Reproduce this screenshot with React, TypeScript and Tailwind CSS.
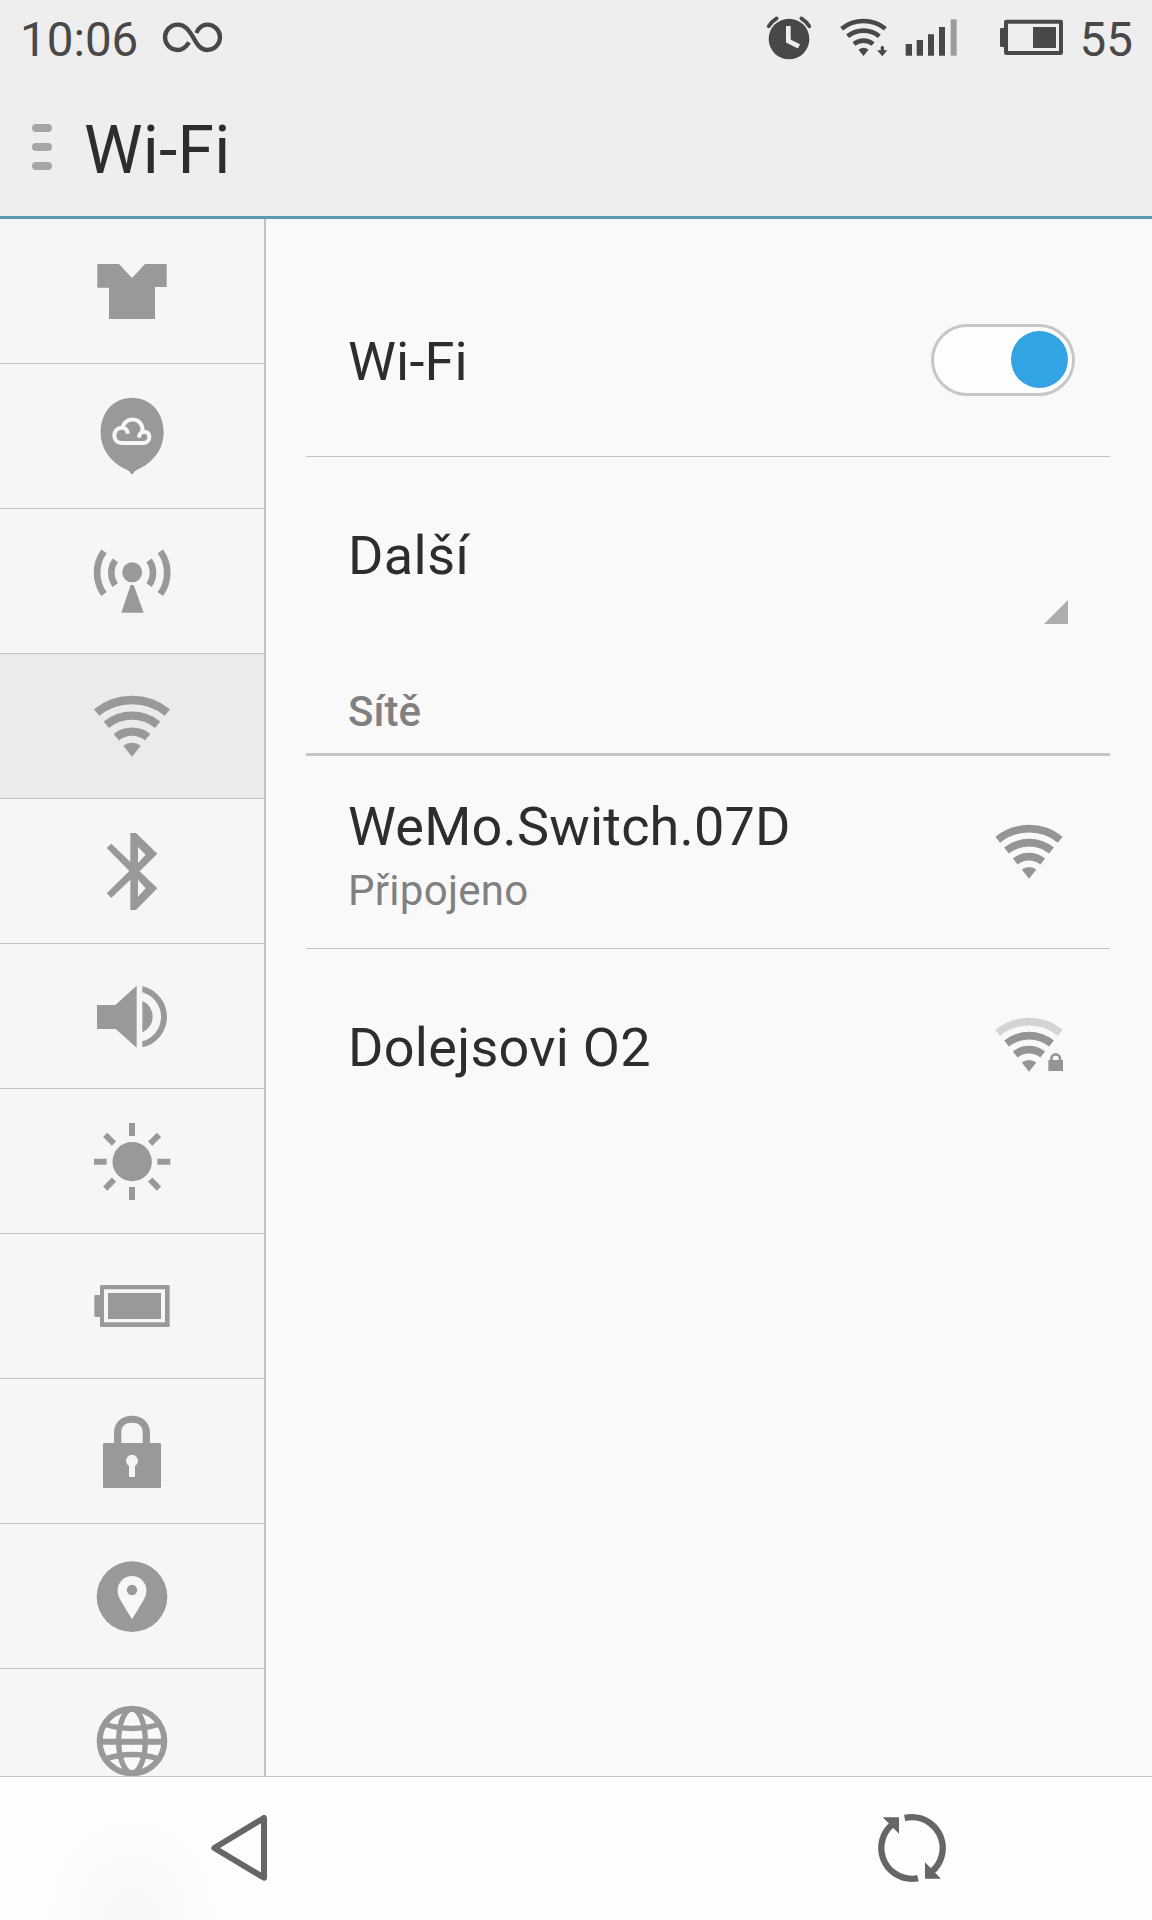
import type { ReactNode } from "react";

const SIN = 0.625;
const COS = 0.78;

type WifiProps = {
  cx: number;
  cy: number;
  radii: number[];
  width: number;
  tip: number;
  weak?: boolean;
};

/* Concentric arcs around the tip of a wedge */
function WifiShape({ cx, cy, radii, width, tip, weak }: WifiProps) {
  return (
    <>
      {radii.map((r, i) => (
        <path
          key={r}
          d={`M${cx - r * SIN} ${cy - r * COS}A${r} ${r} 0 0 1 ${cx + r * SIN} ${cy - r * COS}`}
          fill="none"
          stroke={weak && i === 0 ? "#d4d4d4" : "currentColor"}
          strokeWidth={width}
        />
      ))}
      <path
        d={`M${cx} ${cy}L${cx - tip * SIN} ${cy - tip * COS}A${tip} ${tip} 0 0 1 ${cx + tip * SIN} ${cy - tip * COS}Z`}
        fill="currentColor"
      />
    </>
  );
}

const sidebar: { name: string; box: string; active?: boolean; icon: ReactNode }[] = [
  {
    name: "Themes",
    box: "276 108 240 240",
    icon: <path d="M292 147H357L396 189L435 147H500V216H465V312H327V218H292Z" />,
  },
  {
    name: "Cloud",
    box: "276 543 240 240",
    icon: (
      <>
        <path d="M396 548C342 548 302 590 302 652C302 705 335 745 383 766Q391 769 393 777H399Q401 769 409 766C457 745 491 705 491 652C491 590 450 548 396 548Z" />
        <path
          d="M384 656Q381 638 366 638A22 23 0 0 0 343 662A21 22 0 0 0 364 684H430A18 18 0 0 0 448 666Q448 650 431 650Q418 652 417 668M368 637A29 29 0 0 1 427 650"
          fill="none"
          stroke="#f7f7f7"
          strokeWidth="12"
        />
      </>
    ),
  },
  {
    name: "Network",
    box: "276 123 240 240",
    icon: (
      <>
        <circle cx="396.5" cy="217" r="30" />
        <path d="M392 255H401L431 338H364Z" />
        <g fill="none" stroke="currentColor" strokeWidth="20">
          <path d="M346 181A63 63 0 0 0 346 255M447 181A63 63 0 0 1 447 255" />
          <path d="M312 154A109 109 0 0 0 312 282M481 154A109 109 0 0 1 481 282" />
        </g>
      </>
    ),
  },
  {
    name: "Wi-Fi",
    box: "276 558 240 240",
    active: true,
    icon: <WifiShape cx={396} cy={770} radii={[170, 123, 75]} width={25} tip={42} />,
  },
  {
    name: "Bluetooth",
    box: "276 123 240 240",
    icon: (
      <path
        fillRule="evenodd"
        d="M391 129H408L472 191L419 244L472 295L408 360H391V269L334 324L320 310L388 243L320 174L334 161L391 216ZM414 171V219L437 194ZM414 269V320L437 295Z"
      />
    ),
  },
  {
    name: "Sound",
    box: "276 558 240 240",
    icon: (
      <>
        <path d="M291 645H346L410 587V773L347 717H291ZM427 633A51 51 0 0 1 427 727Z" />
        <path d="M427 589A93.6 93.6 0 0 1 427 772V754A76.2 76.2 0 0 0 427 607Z" />
      </>
    ),
  },
  {
    name: "Display",
    box: "276 123 240 240",
    icon: (
      <>
        <circle cx="396.5" cy="245" r="59" />
        <path
          d="M396 129V168M396 321V360M282 245.500H320M472 245.500H511M315.500 164.500L342 191M477 164.500L450.500 191M342 299L315.500 326M450.500 299L477 326"
          fill="none"
          stroke="currentColor"
          strokeWidth="18"
        />
      </>
    ),
  },
  {
    name: "Battery",
    box: "276 558 240 240",
    icon: (
      <>
        <path
          fillRule="evenodd"
          d="M304 615H505Q509 615 509 619V737Q509 741 505 741H304Q300 741 300 737V711H287Q283 711 283 707V649Q283 645 287 645H300V619Q300 615 304 615ZM312 628V727H495V628Z"
        />
        <rect x="324" y="639" width="159" height="78" />
      </>
    ),
  },
  {
    name: "Security",
    box: "276 123 240 240",
    icon: (
      <>
        <path
          fillRule="evenodd"
          d="M342 222V188C342 158 364 137 396 137C428 137 450 158 450 188V222ZM364 219H428V185C428 168 415 158 396 158C377 158 364 168 364 185Z"
        />
        <rect x="309" y="219" width="174" height="135" rx="4" />
        <path d="M387 321V288A18 18 0 1 1 405 288V321Z" fill="#f5f5f5" />
      </>
    ),
  },
  {
    name: "Location",
    box: "276 558 240 240",
    icon: (
      <>
        <circle cx="396" cy="680" r="106" />
        <path d="M396 748L361 690C356 681 353 673 353 661A43 43 0 0 1 439 661C439 673 436 681 431 690Z" fill="#f7f7f7" />
        <circle cx="396" cy="660" r="15.500" />
      </>
    ),
  },
  {
    name: "Language",
    box: "276 183 240 240",
    icon: (
      <>
        <circle cx="396" cy="303" r="97" fill="#f9f9f9" />
        <g fill="none" stroke="currentColor" strokeWidth="16">
          <circle cx="396" cy="303" r="97" strokeWidth="18" />
          <ellipse cx="396" cy="303" rx="40" ry="96" />
          <path d="M300 305.500H492" strokeWidth="18" />
          <path d="M312 252Q396 279 480 252M312 358Q396 329 480 358" />
        </g>
      </>
    ),
  },
];

function StatusBar() {
  return (
    <div className="flex h-20 items-center justify-between pl-[20px] pr-[19px] text-[47.500px] leading-[80px] text-[#484848]">
      <div className="flex items-center gap-[24px]">
        <span className="-mt-px">10:06</span>
        <svg className="h-20 w-[61px]" viewBox="486 0 183 240" fill="none" stroke="currentColor" strokeWidth="13">
          <path d="M567 127C557 143 547 150 533 150A38 38 0 0 1 533 74C558 74 569 95 579 111C590 129 599 150 622 150A38 38 0 0 0 622 74C606 74 596 83 589 99" />
        </svg>
      </div>
      <div className="flex items-center">
        <svg className="mr-[26px] h-20 w-12" viewBox="75 0 144 240" fill="currentColor">
          <circle cx="147" cy="117" r="61" />
          <path d="M145 78V123L177 139" fill="none" stroke="#eeeeee" strokeWidth="14" />
          <path
            d="M86 79A73 73 0 0 1 110 55M184 55A73 73 0 0 1 208 79"
            fill="none"
            stroke="currentColor"
            strokeWidth="11"
            strokeLinecap="round"
          />
        </svg>
        <svg className="mr-4 h-20 w-[49px]" viewBox="297 0 147 240">
          <WifiShape cx={370.5} cy={168} radii={[105, 76, 46]} width={14} tip={24} />
          <path d="M422 141L427 137L432 141V151H442L427 169L411 151H422Z" fill="currentColor" />
        </svg>
        <svg className="mr-[41px] h-20 w-[54px]" viewBox="492 0 162 240" fill="currentColor">
          <path d="M497 132H516V167H497ZM530 120H549V167H530ZM564 103H582V167H564ZM597 81H615V167H597Z" />
          <path d="M632 58H650V167H632Z" fill="#9b9b9b" />
        </svg>
        <svg className="mr-[16px] h-20 w-[65px]" viewBox="777 0 195 240" fill="currentColor">
          <rect x="798" y="65" width="165" height="94" rx="1" fill="none" stroke="currentColor" strokeWidth="12" />
          <rect x="780" y="84" width="16" height="57" rx="4" />
          <rect x="879" y="81" width="69" height="63" />
        </svg>
        <span className="-mt-px">55</span>
      </div>
    </div>
  );
}

function TitleBar() {
  return (
    <div className="flex h-[136px] items-center pl-8">
      <div className="flex flex-col gap-[11px] pb-[3px]">
        <span className="h-2 w-5 rounded-full bg-[#a6a6a6]" />
        <span className="h-2 w-5 rounded-full bg-[#a6a6a6]" />
        <span className="h-2 w-5 rounded-full bg-[#a6a6a6]" />
      </div>
      <h1 className="pl-8 pt-[5px] text-[66px] leading-[80px] tracking-[0.2px] text-[#2d2d2d]">Wi-Fi</h1>
    </div>
  );
}

function Sidebar() {
  return (
    <nav className="h-full w-[266px] shrink-0 overflow-hidden border-r-2 border-[#c3c3c3] bg-[#f6f6f6]">
      {sidebar.map((item) => (
        <div
          key={item.name}
          className={`flex h-[145px] items-center justify-center border-b border-[#c3c3c3] text-[#98999b] ${
            item.active ? "bg-[#ebebeb]" : "bg-[#f6f6f6]"
          }`}
        >
          <svg className="size-20" viewBox={item.box} fill="currentColor">
            {item.icon}
          </svg>
        </div>
      ))}
    </nav>
  );
}

function NetworkIcon({ locked }: { locked?: boolean }) {
  return (
    <svg className="mr-[45px] h-16 w-[72px] text-[#959595]" viewBox="99 270 216 192" fill="currentColor">
      <WifiShape cx={207} cy={446} radii={[150, 108, 66]} width={23} tip={35} weak={locked} />
      {locked && (
        <>
          <rect x="265" y="411" width="44" height="33" />
          <path d="M274 413V407A13 13 0 0 1 300 407V413" fill="none" stroke="currentColor" strokeWidth="8" />
        </>
      )}
    </svg>
  );
}

function Content() {
  return (
    <main className="flex-1 pl-10 pr-[42px] text-[54px] leading-[64px] tracking-[0.2px] text-[#2d2d2d]">
      <div className="flex h-[238px] items-center justify-between border-b border-[#c3c3c3] pl-[42px] pr-[35px] pt-[45px]">
        <span className="pt-1">Wi-Fi</span>
        <div className="flex h-[72px] w-36 items-center justify-end rounded-full border-[3px] border-[#c6c6c6] bg-[#fdfdfd] pr-1 pb-px">
          <span className="size-[57px] rounded-full bg-[#32a4e4]" />
        </div>
      </div>
      <div className="flex h-[198px] items-center justify-between pl-[42px] pr-[42px]">
        <span className="tracking-[0.4px]">Další</span>
        <svg className="mb-[31px] size-6 self-end" viewBox="0 0 24 24">
          <path d="M24 0V24H0Z" fill="#adadad" />
        </svg>
      </div>
      <div className="flex h-[101px] items-center border-b-[3px] border-[#c6c6c6] pl-[42px] pt-[15px] text-[42px] font-medium tracking-normal text-[#808080]">
        Sítě
      </div>
      <div className="flex h-[193px] items-center justify-between border-b border-[#c3c3c3] pl-[42px]">
        <div className="flex flex-col pt-[13px]">
          <span>WeMo.Switch.07D</span>
          <span className="text-[42px] tracking-[0.28px] text-[#808080]">Připojeno</span>
        </div>
        <NetworkIcon />
      </div>
      <div className="flex h-[192px] items-center justify-between pl-[42px]">
        <span className="pt-[5px] tracking-[0.3px]">Dolejsovi O2</span>
        <NetworkIcon locked />
      </div>
    </main>
  );
}

function NavBar() {
  return (
    <footer className="flex h-36 justify-between border-t border-[#c3c3c3] bg-[#fdfdfd] bg-[radial-gradient(ellipse_84px_100px_at_132px_143px,#f7f7f7_0%,#f9f9f9_50%,#fbfbfb_80%,#fdfdfd_100%)] pl-[204px] pr-[202px] pt-9 text-[#666666]">
      <svg className="h-[70px] w-[70px]" viewBox="612 519 210 210" fill="none" stroke="currentColor">
        <path d="M792 534V713L643 624Z" strokeWidth="18" strokeLinejoin="round" />
      </svg>
      <svg className="h-[80px] w-[80px]" viewBox="90 129 240 240" fill="currentColor">
        <g fill="none" stroke="currentColor" strokeWidth="19">
          <path d="M194 143.500Q205 141.500 216 141.500A92.500 92.500 0 0 1 275 305" />
          <path d="M234 324.500Q227 326.500 216 326.500A92.500 92.500 0 0 1 157 163" />
        </g>
        <path d="M128 142H177V191ZM255 277L303 326H255Z" />
      </svg>
    </footer>
  );
}

export default function App() {
  return (
    <div className="flex h-[1920px] w-[1152px] flex-col overflow-hidden bg-[#f9f9f9] font-[Roboto,sans-serif]">
      <header className="h-[219px] shrink-0 border-b-[3px] border-[#5a9ab0] bg-[#eeeeee]">
        <StatusBar />
        <TitleBar />
      </header>
      <div className="flex h-[1557px] shrink-0 overflow-hidden">
        <Sidebar />
        <Content />
      </div>
      <NavBar />
    </div>
  );
}
